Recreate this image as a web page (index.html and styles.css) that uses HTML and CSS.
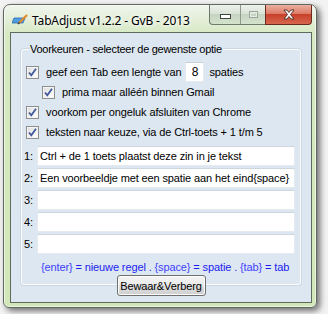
FILE: index.html
```html
<!DOCTYPE html>
<html>
<head>
<meta charset="utf-8">
<link rel="stylesheet" href="styles.css">
</head>
<body>
<div class="window">
  <div class="titlebar">
    <svg class="appicon" width="16" height="12" viewBox="0 0 16 12">
      <polygon points="2,4 13,4 11,9 0,9" fill="#4f9de0" stroke="#2a6cb0" stroke-width="0.8"/>
      <line x1="7" y1="9" x2="15" y2="1" stroke="#e08a2a" stroke-width="2.2"/>
      <line x1="6" y1="10" x2="7.5" y2="8.5" stroke="#333" stroke-width="1.2"/>
    </svg>
    <span class="title">TabAdjust v1.2.2 - GvB - 2013</span>
    <div class="caption">
      <div class="capgroup">
        <div class="capbtn minbtn"><span class="minglyph"></span></div>
        <div class="capbtn maxbtn"><span class="maxglyph"></span></div>
      </div>
      <div class="capbtn closebtn">
        <svg width="14" height="11" viewBox="0 0 14 11">
          <path d="M2 1 L5 1 L7 3.5 L9 1 L12 1 L8.5 5.5 L12 10 L9 10 L7 7.5 L5 10 L2 10 L5.5 5.5 Z" fill="#fff" stroke="#4a2a22" stroke-width="0.9" stroke-linejoin="round"/>
        </svg>
      </div>
    </div>
  </div>
  <div class="client">
    <div class="group">
      <div class="legend">Voorkeuren - selecteer de gewenste optie</div>
      <div class="cbrow">
        <span class="cb"><svg width="11" height="11" viewBox="0 0 11 11"><path d="M2 5.5 L4.3 8.3 L9 1.8" fill="none" stroke="#41589a" stroke-width="1.8"/></svg></span>
        <span class="cblabel">geef een Tab een lengte van</span>
        <span class="numbox">8</span>
        <span class="after">spaties</span>
      </div>
      <div class="cbrow indent">
        <span class="cb"><svg width="11" height="11" viewBox="0 0 11 11"><path d="M2 5.5 L4.3 8.3 L9 1.8" fill="none" stroke="#41589a" stroke-width="1.8"/></svg></span>
        <span class="cblabel">prima maar alléén binnen Gmail</span>
      </div>
      <div class="cbrow">
        <span class="cb"><svg width="11" height="11" viewBox="0 0 11 11"><path d="M2 5.5 L4.3 8.3 L9 1.8" fill="none" stroke="#41589a" stroke-width="1.8"/></svg></span>
        <span class="cblabel">voorkom per ongeluk afsluiten van Chrome</span>
      </div>
      <div class="cbrow">
        <span class="cb"><svg width="11" height="11" viewBox="0 0 11 11"><path d="M2 5.5 L4.3 8.3 L9 1.8" fill="none" stroke="#41589a" stroke-width="1.8"/></svg></span>
        <span class="cblabel">teksten naar keuze, via de Ctrl-toets + 1 t/m 5</span>
      </div>
      <div class="fields">
        <div class="frow"><span class="num">1:</span><span class="field">Ctrl + de 1 toets plaatst deze zin in je tekst</span></div>
        <div class="frow"><span class="num">2:</span><span class="field">Een voorbeeldje met een spatie aan het eind{space}</span></div>
        <div class="frow"><span class="num">3:</span><span class="field"></span></div>
        <div class="frow"><span class="num">4:</span><span class="field"></span></div>
        <div class="frow"><span class="num">5:</span><span class="field"></span></div>
      </div>
      <div class="hint"><span class="br">{enter}</span> = nieuwe regel . <span class="br">{space}</span> = spatie . <span class="br">{tab}</span> = tab</div>
    </div>
    <div class="btnrow"><span class="button">Bewaar&amp;Verberg</span></div>
  </div>
</div>
</body>
</html>
```
FILE: styles.css
```css
html, body {
  margin: 0;
  padding: 0;
}
body {
  width: 328px;
  height: 314px;
  background: #f3f3f3;
  overflow: hidden;
  padding: 4px 0 0 3px;
  box-sizing: border-box;
  font-family: "Liberation Sans", Arial, sans-serif;
  font-size: 11px;
  letter-spacing: -0.12px;
  color: #000;
}
.window {
  width: 314px;
  height: 304px;
  box-sizing: border-box;
  border: 1px solid #5d6a5d;
  border-radius: 7px 7px 6px 6px;
  background: linear-gradient(to bottom, #f1f5ee 0px, #e3eed8 14px, #d6e9c2 30px, #d2e7b8 100%);
  box-shadow: 3px 3px 6px rgba(0,0,0,0.55), inset 0 0 0 1px rgba(255,255,255,0.6);
  display: flex;
  flex-direction: column;
}
.titlebar {
  height: 27px;
  display: flex;
  align-items: flex-start;
  flex-shrink: 0;
}
.appicon {
  margin: 9px 0 0 8px;
}
.title {
  font-family: "Noto Sans", "DejaVu Sans", sans-serif;
  font-size: 12px;
  line-height: 16px;
  margin: 8px 0 0 4px;
  color: #000;
  letter-spacing: -0.15px;
  text-shadow: 0 0 6px #fff, 0 0 4px #fff;
}
.caption {
  margin-left: auto;
  margin-right: 4px;
  display: flex;
}
.capgroup {
  display: flex;
  border: 1px solid #6c7a6c;
  border-top: none;
  border-right: none;
  border-radius: 0 0 0 4px;
  background: linear-gradient(to bottom, #eef2ec 0%, #d9e2d6 45%, #c6d3c2 50%, #d4e3cc 100%);
  height: 19px;
  overflow: hidden;
}
.capbtn {
  height: 19px;
  display: flex;
  align-items: center;
  justify-content: center;
}
.minbtn {
  width: 30px;
  border-right: 1px solid #8c9a8c;
}
.maxbtn {
  width: 24px;
}
.minglyph {
  width: 9px;
  height: 3px;
  margin-top: 4px;
  background: #fff;
  border: 1px solid #3c463c;
}
.maxglyph {
  width: 7px;
  height: 5px;
  border: 1px solid #9aa69a;
  box-shadow: inset 0 0 0 1px #e8ece8;
}
.closebtn {
  width: 47px;
  height: 20px;
  border: 1px solid #6a2a1e;
  border-top: none;
  border-radius: 0 0 4px 0;
  background: linear-gradient(to bottom, #eab0a2 0%, #dd7b66 45%, #c8402a 50%, #d7674e 100%);
  box-sizing: border-box;
}
.client {
  flex: 1;
  margin: 0 4px 4px 6px;
  border: 1px solid #5e6c5e;
  background: #dde7f1;
  display: flex;
  flex-direction: column;
}
.group {
  margin: 16px 10px 0 10px;
  border: 1px solid #f9fbfd;
  border-radius: 3px;
  box-shadow: 0 0 0 1px #cfd8e1;
  padding: 0 0 10px 0;
  display: flex;
  flex-direction: column;
}
.legend {
  align-self: flex-start;
  margin: -7px 0 0 7px;
  padding: 0 1px;
  line-height: 13px;
  background: #dde7f1;
  white-space: nowrap;
  letter-spacing: -0.28px;
}
.cbrow {
  height: 20px;
  display: flex;
  align-items: center;
  padding-left: 4px;
  white-space: nowrap;
}
.legend + .cbrow {
  margin-top: 6px;
}
.cbrow.indent {
  padding-left: 20px;
}
.cb {
  width: 11px;
  height: 11px;
  border: 1px solid #8f8f8f;
  background: linear-gradient(135deg, #dcdcdc 0%, #f4f4f4 60%, #ffffff 100%);
  box-shadow: inset 0 0 0 1px #f4f4f4;
  display: flex;
  align-items: center;
  justify-content: center;
}
.cblabel {
  margin-left: 7px;
}
.numbox {
  width: 19px;
  height: 20px;
  box-sizing: border-box;
  margin-left: 4px;
  background: #fff;
  border: 1px solid #e4eaf0;
  border-top-color: #c8d0d8;
  display: flex;
  align-items: center;
  justify-content: center;
  font-size: 12px;
}
.after {
  margin-left: 5px;
}
.fields {
  margin-top: 4px;
  display: flex;
  flex-direction: column;
  gap: 2px;
}
.frow {
  display: flex;
  align-items: center;
  padding-left: 2px;
}
.num {
  width: 13px;
}
.field {
  width: 258px;
  height: 20px;
  box-sizing: border-box;
  background: #fff;
  border: 1px solid #e4eaf0;
  border-top-color: #cdd5dd;
  line-height: 18px;
  padding-left: 2px;
  white-space: nowrap;
  overflow: hidden;
}
.hint {
  margin-top: 7px;
  line-height: 13px;
  padding-left: 19px;
  color: #1c1cf0;
  white-space: nowrap;
}
.hint .br {
  color: #3f3fff;
}
.btnrow {
  display: flex;
  justify-content: center;
  margin-top: -10px;
}
.button {
  width: 89px;
  height: 21px;
  box-sizing: border-box;
  border: 1px solid #707070;
  border-radius: 3px;
  background: linear-gradient(to bottom, #f4f4f4 0%, #ebebeb 48%, #dddddd 52%, #d0d0d0 100%);
  box-shadow: inset 0 0 0 1px #fcfcfc;
  display: flex;
  align-items: center;
  justify-content: center;
  position: relative;
  z-index: 1;
}
```
